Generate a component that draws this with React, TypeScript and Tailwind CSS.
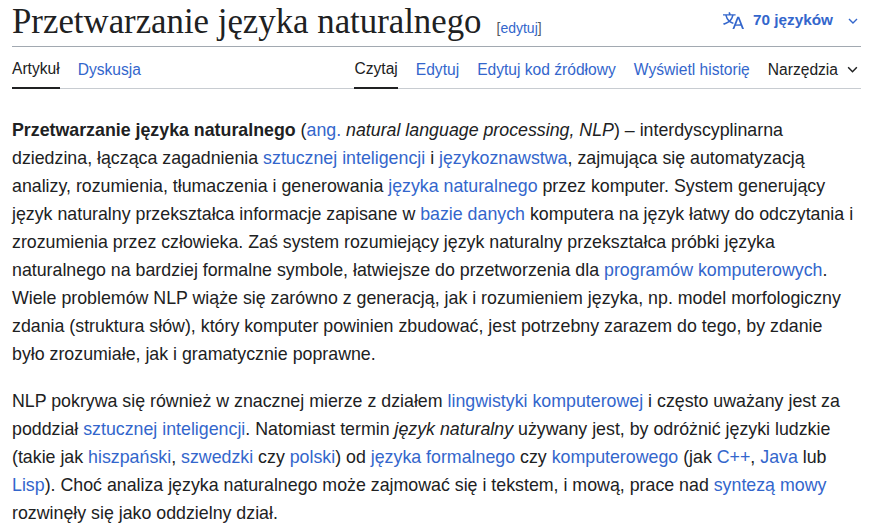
import React from "react";

const L = ({ children }: { children: React.ReactNode }) => <a className="text-[#3366cc]">{children}</a>;

export default function App() {
  return (
    <div className="bg-white w-[869px] h-[531px] overflow-hidden pl-[12px] pr-[8px] text-[#202122]" style={{ fontFamily: '"Liberation Sans", Arial, sans-serif' }}>
      <div className="flex items-end justify-between border-b border-[#a2a9b1] h-[47px] pb-[6px]">
        <div className="flex items-baseline">
          <h1 className="text-[34.8px] leading-none whitespace-nowrap" style={{ fontFamily: '"Liberation Serif", "Times New Roman", serif' }}>Przetwarzanie języka naturalnego</h1>
          <span className="ml-[15px] text-[14px] text-[#54595d]">[<span className="text-[#3366cc]">edytuj</span>]</span>
        </div>
        <div className="flex items-center gap-[6px] text-[#3366cc] text-[15.3px] font-bold mb-[8px] mr-[2px] whitespace-nowrap">
          <svg width="21" height="21" viewBox="0 0 20 20" fill="#3366cc"><path d="M20 18h-1.44a.61.61 0 0 1-.4-.12.81.81 0 0 1-.23-.31L17 15h-5l-1 2.54a.77.77 0 0 1-.22.3.59.59 0 0 1-.4.14H9l4.55-11.470h1.89zm-3.53-4.31L14.890 9.5a11.62 11.62 0 0 1-.39-1.24q-.09.37-.19.69l-.19.56-1.58 4.19zm-6.3-1.58a13.43 13.43 0 0 1-2.91-1.41 11.46 11.46 0 0 0 2.81-5.37H12V4H7.31a4 4 0 0 0-.2-.56C6.870 2.79 6.6 2 6.6 2l-1.47.5s.4.89.6 1.5H0v1.33h2.15A11.23 11.23 0 0 0 5 10.7a17.19 17.19 0 0 1-5 2.1q.56.82.87 1.38a23.28 23.28 0 0 0 5.22-2.51 15.64 15.64 0 0 0 3.56 1.77zM3.63 5.33h4.91a8.11 8.11 0 0 1-2.45 4.45 9.11 9.110 0 0 1-2.46-4.45z"/></svg>
          <span className="ml-[3px]">70 języków</span>
          <svg className="ml-[8px]" width="12" height="12" viewBox="0 0 12 12" fill="none" stroke="#3366cc" strokeWidth="1.4"><path d="M2 4l4 4 4-4"/></svg>
        </div>
      </div>
      <div className="flex justify-between text-[15.6px] border-b border-[#c8ccd1] h-[42px] items-stretch whitespace-nowrap">
        <div className="flex gap-[18px]">
          <span className="flex items-center border-b-2 border-[#202122] -mb-px pt-[4px]">Artykuł</span>
          <span className="flex items-center text-[#3366cc] pt-[4px]">Dyskusja</span>
        </div>
        <div className="flex gap-[18px]">
          <span className="flex items-center border-b-2 border-[#202122] -mb-px pt-[4px]">Czytaj</span>
          <span className="flex items-center text-[#3366cc] pt-[4px]">Edytuj</span>
          <span className="flex items-center text-[#3366cc] pt-[4px]">Edytuj kod źródłowy</span>
          <span className="flex items-center text-[#3366cc] pt-[4px]">Wyświetl historię</span>
          <span className="flex items-center gap-[8px] pt-[4px] mr-[2px]">Narzędzia
            <svg width="13" height="13" viewBox="0 0 12 12" fill="none" stroke="#202122" strokeWidth="1.4"><path d="M2 4l4 4 4-4"/></svg>
          </span>
        </div>
      </div>
      <div className="text-[17.8px] leading-[28px] pt-[27px] pr-[4px]">
        <p className="mb-[19px]">
          <b>Przetwarzanie języka naturalnego</b> (<L>ang.</L> <i>natural language processing, NLP</i>) – interdyscyplinarna dziedzina, łącząca zagadnienia <L>sztucznej inteligencji</L> i <L>językoznawstwa</L>, zajmująca się automatyzacją analizy, rozumienia, tłumaczenia i generowania <L>języka naturalnego</L> przez komputer. System generujący język naturalny przekształca informacje zapisane w <L>bazie danych</L> komputera na język łatwy do odczytania i zrozumienia przez człowieka. Zaś system rozumiejący język naturalny przekształca próbki języka naturalnego na bardziej formalne symbole, łatwiejsze do przetworzenia dla <L>programów komputerowych</L>. Wiele problemów NLP wiąże się zarówno z generacją, jak i rozumieniem języka, np. model morfologiczny zdania (struktura słów), który komputer powinien zbudować, jest potrzebny zarazem do tego, by zdanie było zrozumiałe, jak i gramatycznie poprawne.
        </p>
        <p>
          NLP pokrywa się również w znacznej mierze z działem <L>lingwistyki komputerowej</L> i często uważany jest za poddział <L>sztucznej inteligencji</L>. Natomiast termin <i>język naturalny</i> używany jest, by odróżnić języki ludzkie (takie jak <L>hiszpański</L>, <L>szwedzki</L> czy <L>polski</L>) od <L>języka formalnego</L> czy <L>komputerowego</L> (jak <L>C++</L>, <L>Java</L> lub <L>Lisp</L>). Choć analiza języka naturalnego może zajmować się i tekstem, i mową, prace nad <L>syntezą mowy</L> rozwinęły się jako oddzielny dział.
        </p>
      </div>
    </div>
  );
}
